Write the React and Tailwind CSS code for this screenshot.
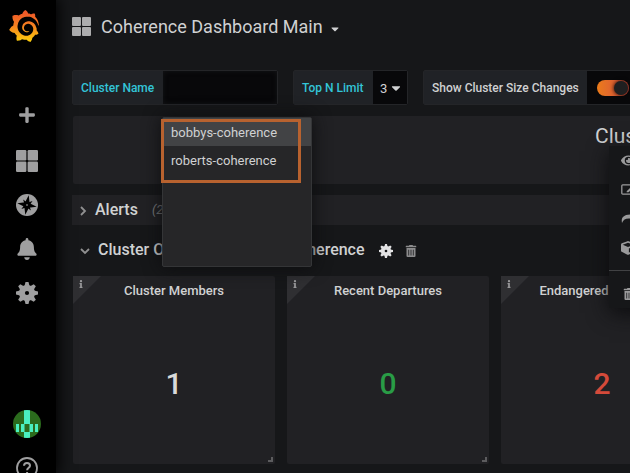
import React from "react";
import { SiGrafana } from "react-icons/si";
import { FaBell, FaCaretDown, FaCube, FaEye, FaInfo, FaPlus, FaTrashAlt } from "react-icons/fa";

function AppsIcon({ className }) {
  return (
    <svg viewBox="0 0 22 22" className={className} fill="currentColor" aria-hidden="true">
      <rect x="0" y="0" width="10.4" height="10.4" rx="1.2" />
      <rect x="11.6" y="0" width="10.4" height="10.4" rx="1.2" />
      <rect x="0" y="11.6" width="10.4" height="10.4" rx="1.2" />
      <rect x="11.6" y="11.6" width="10.4" height="10.4" rx="1.2" />
    </svg>
  );
}

function CompassIcon({ className }) {
  return (
    <svg viewBox="0 0 22 22" className={className} aria-hidden="true">
      <circle cx="11" cy="11" r="11" fill="currentColor" />
      <g transform="rotate(10 11 11)" fill="#000">
        <path d="M11 1.200 13.300 8.700 20.800 11 13.300 13.300 11 20.800 8.700 13.300 1.200 11 8.700 8.700Z" />
        <path d="M6.200 6.200 11 8.600 15.800 6.200 13.400 11 15.800 15.800 11 13.400 6.200 15.800 8.600 11Z" />
      </g>
      <circle cx="11" cy="11" r="0.9" fill="#777" />
    </svg>
  );
}

function GearIcon({ className, hole }) {
  return (
    <svg viewBox="0 0 22 22" className={className} fill="currentColor" aria-hidden="true">
      <circle cx="11" cy="11" r="8" />
      {[0, 45, 90, 135].map((angle) => (
        <path
          key={angle}
          transform={`rotate(${angle} 11 11)`}
          d="M9.500 0h3l1 4v14l-1 4h-3l-1-4V4z"
        />
      ))}
      <circle cx="11" cy="11" r="2.100" fill={hole} />
    </svg>
  );
}

function Avatar() {
  return (
    <svg viewBox="0 0 28 28" className="size-7" role="img" aria-label="User profile">
      <clipPath id="avatar-clip">
        <circle cx="14" cy="14" r="14" />
      </clipPath>
      <g clipPath="url(#avatar-clip)">
        <rect width="28" height="28" fill="#2b6b1d" />
        <path
          fill="#4af0c0"
          d="M11 0h6v14h-6zM3 14h3v8H3zM8 14h3v8H8zM17 14h3v8h-3zM22 14h3v8h-3zM11 22h6v6h-6z"
        />
        <path fill="#3fae74" d="M11 14h1v8h-1zM16 14h1v8h-1z" />
      </g>
    </svg>
  );
}

function HelpIcon() {
  return (
    <svg viewBox="0 0 22 22" className="size-[22px]" fill="none" stroke="currentColor" aria-hidden="true">
      <circle cx="11" cy="11" r="10" strokeWidth="1.8" />
      <path d="M8 8.8C8 6.8 9.300 6 11 6s3 1 3 2.700c0 2-2.900 2.200-2.900 4.600" strokeWidth="2" />
      <path d="M11.100 15v2" strokeWidth="2" />
    </svg>
  );
}

function Chevron({ className }) {
  return (
    <svg viewBox="0 0 10 10" className={className} fill="none" stroke="currentColor" strokeWidth="1.800" aria-hidden="true">
      <path d="M3 1l4 4-4 4" />
    </svg>
  );
}

function Sidebar() {
  const item = "flex h-11 w-full shrink-0 items-center justify-center";
  return (
    <nav className="relative z-10 flex w-14 shrink-0 flex-col bg-black pr-0.5 text-[#9f9fa0] shadow-[0_0_14px_2px_#000]">
      <a href="#home" aria-label="Home" className="flex h-[91px] shrink-0 items-start pt-2.5 pl-2">
        <svg width="0" height="0" className="absolute" aria-hidden="true">
          <linearGradient id="logo-fill" x1="0" y1="0" x2="0" y2="1">
            <stop offset="0.1" stopColor="#f05a28" />
            <stop offset="0.5" stopColor="#f58220" />
            <stop offset="1" stopColor="#fdd00a" />
          </linearGradient>
        </svg>
        <SiGrafana className="size-8" fill="url(#logo-fill)" stroke="none" />
      </a>
      <a href="#create" aria-label="Create" className="flex h-12 w-full shrink-0 items-center justify-center">
        <FaPlus className="size-[18px]" />
      </a>
      <a href="#dashboards" aria-label="Dashboards" className={item}>
        <AppsIcon className="size-[22px]" />
      </a>
      <a href="#explore" aria-label="Explore" className={item}>
        <CompassIcon className="size-[22px]" />
      </a>
      <a href="#alerting" aria-label="Alerting" className={item}>
        <FaBell className="size-[22px]" />
      </a>
      <a href="#configuration" aria-label="Configuration" className={item}>
        <GearIcon className="size-[22px]" hole="#000" />
      </a>
      <div className="h-[87px] shrink-0" />
      <a href="#profile" className={item}>
        <Avatar />
      </a>
      <a href="#help" aria-label="Help" className={item}>
        <HelpIcon />
      </a>
    </nav>
  );
}

const fieldLabel =
  "flex items-center whitespace-nowrap bg-[#202226] px-2 text-[12px] font-medium";
const field = "relative flex h-[35px] shrink-0 rounded-xs border border-[#242528] bg-[#08080a]";

function Controls() {
  return (
    <div className="flex gap-[15px]">
      <div className={field}>
        <label htmlFor="cluster" className={fieldLabel + " w-[90px] text-[#33c5d8]"}>
          Cluster Name
        </label>
        <input
          id="cluster"
          type="text"
          className="w-[114px] bg-[#08080a] px-2 text-[13px] shadow-[inset_0_0_5px_#151618] outline-none"
        />
        <div className="absolute top-[46px] left-[89px] z-20 h-[150px] w-[150px] rounded-xs border border-[#343537] bg-[#262628] shadow-[0_0_18px_#0c0c0e]">
          <ul role="listbox" aria-label="Cluster Name" className="text-[13px] leading-[26px]">
            <li role="option" aria-selected="true" className="bg-[#424345] px-2 pt-0.5">
              bobbys-coherence
            </li>
            <li role="option" aria-selected="false" className="px-2 pt-0.5">
              roberts-coherence
            </li>
          </ul>
          <div className="absolute top-px -left-0.5 h-16 w-[140px] border-3 border-[#b8622f]" />
        </div>
      </div>
      <div className={field}>
        <label htmlFor="limit" className={fieldLabel + " w-[79px] text-[#33c5d8]"}>
          Top N Limit
        </label>
        <select id="limit" className="w-[34px] appearance-none bg-[#08080a] pt-0.5 pl-[7px] text-[13px] outline-none">
          <option>3</option>
        </select>
        <FaCaretDown className="pointer-events-none absolute top-2.5 right-1 size-3.5" />
      </div>
      <div className={field}>
        <label htmlFor="changes" className={fieldLabel + " w-[163px]"}>
          Show Cluster Size Changes
        </label>
        <div className="flex w-[54px] items-center pl-2.5">
          <input
            id="changes"
            type="checkbox"
            defaultChecked
            className="h-4 w-8 appearance-none rounded-full bg-linear-to-r from-[#eb7b18] to-[#d44a3a] before:mt-px before:ml-[17px] before:block before:size-3.5 before:rounded-full before:bg-[#1f1f20] before:shadow-[0_0_4px_#000] before:content-['']"
          />
        </div>
      </div>
    </div>
  );
}

function PanelMenu() {
  const entry = "flex h-[29px] w-full items-center pl-3";
  return (
    <div className="absolute top-[30px] left-[536px] z-10 w-40 bg-[#161719] text-[#9a9a9b] shadow-[0_5px_20px_#0c0c0e]">
      <button type="button" aria-label="View" className={entry}>
        <FaEye className="size-[15px]" />
      </button>
      <button type="button" aria-label="Edit" className={entry}>
        <svg viewBox="0 0 16 12" className="h-[11px] w-[15px]" fill="none" stroke="currentColor" strokeWidth="1.400">
          <rect x="0.7" y="1" width="14" height="10" rx="1" />
          <path d="M6 8l5-5 2 2-5 4H6z" fill="currentColor" stroke="none" />
        </svg>
      </button>
      <button type="button" aria-label="Share" className={entry}>
        <svg viewBox="0 0 16 14" className="h-3.5 w-4" fill="currentColor">
          <path d="M1 11C0 6 2 2.500 10 2.500V0l6 4.500L10 9V6.500C5 6 2.500 7 1 11Z" />
        </svg>
      </button>
      <button type="button" aria-label="More" className={entry}>
        <FaCube className="size-3.5" />
      </button>
      <hr className="mt-2 mb-2 border-[#414244]" />
      <button type="button" aria-label="Remove" className={entry}>
        <FaTrashAlt className="ml-0.5 size-3" />
      </button>
    </div>
  );
}

const stats = [
  { title: "Cluster Members", value: 1, color: "text-[#d8d9da]" },
  { title: "Recent Departures", value: 0, color: "text-[#299c46]" },
  { title: "Endangered", value: 2, color: "text-[#d44a3a]" },
];

function StatPanel({ title, value, color }) {
  return (
    <section className="relative flex h-[188px] w-[202px] shrink-0 flex-col rounded-xs bg-[#212124]">
      <div className="absolute top-0 left-0 size-7 bg-[#2f2f32] [clip-path:polygon(0_0,100%_0,0_100%)]">
        <FaInfo className="mt-1 ml-1 size-2 text-[#98989a]" />
      </div>
      <h3 className={"pt-[5px] text-center text-[13px] leading-5 font-medium " + (value === 2 ? "pr-14" : "")}>
        {title}
      </h3>
      <p className={"pt-[63px] text-center text-[30px] leading-10 font-medium " + color}>{value}</p>
      <div className="absolute right-0.5 bottom-0.5 size-[5px] border-r-2 border-b-2 border-[#5c5c5e]" />
    </section>
  );
}

export default function App() {
  return (
    <div className="flex h-screen overflow-hidden bg-[#161719] font-[Roboto,'Liberation_Sans',sans-serif] text-[#d0d1d2]">
      <Sidebar />
      <main className="min-w-0 flex-1 overflow-hidden pl-4">
        <header className="flex h-[70px] items-start pt-3">
          <AppsIcon className="mt-[5px] mr-2.5 size-[19px] text-[#adadae]" />
          <h1 className="text-[18px] leading-[30px]">Coherence Dashboard Main</h1>
          <FaCaretDown className="mt-[11px] ml-1.5 size-3" />
        </header>

        <Controls />

        <section className="relative mt-[11px] ml-px h-[68px] w-[1058px] rounded-xs bg-[#212124]">
          <h2 className="pt-1 pl-[522px] text-[21px] leading-8">Clus</h2>
          <PanelMenu />
        </section>

        <div className="mt-[11px] flex h-[30px] w-[1060px] items-center bg-[#212124] pl-1.5">
          <Chevron className="mt-0.5 size-2.5 text-[#909091]" />
          <h2 className="ml-[7px] text-[16px] font-medium">Alerts</h2>
          <span className="ml-3.5 text-[13px] text-[#77787a] italic">(2 panels)</span>
        </div>

        <div className="mt-2.5 flex h-[30px] items-center pl-2">
          <Chevron className="mt-0.5 size-2.5 rotate-90 text-[#909091]" />
          <h2 className="ml-2 text-[16px] font-medium whitespace-nowrap">
            Cluster Overview - bobbys-coherence
          </h2>
          <button type="button" aria-label="Row settings" className="mt-0.5 ml-3.5">
            <GearIcon className="size-3.5 text-[#e3e3e4]" hole="#161719" />
          </button>
          <button type="button" aria-label="Delete row" className="mt-0.5 ml-3">
            <FaTrashAlt className="size-3 text-[#8c8c8d]" />
          </button>
        </div>

        <div className="mt-[11px] ml-px flex gap-3">
          {stats.map((stat) => (
            <StatPanel key={stat.title} {...stat} />
          ))}
        </div>
      </main>
    </div>
  );
}
